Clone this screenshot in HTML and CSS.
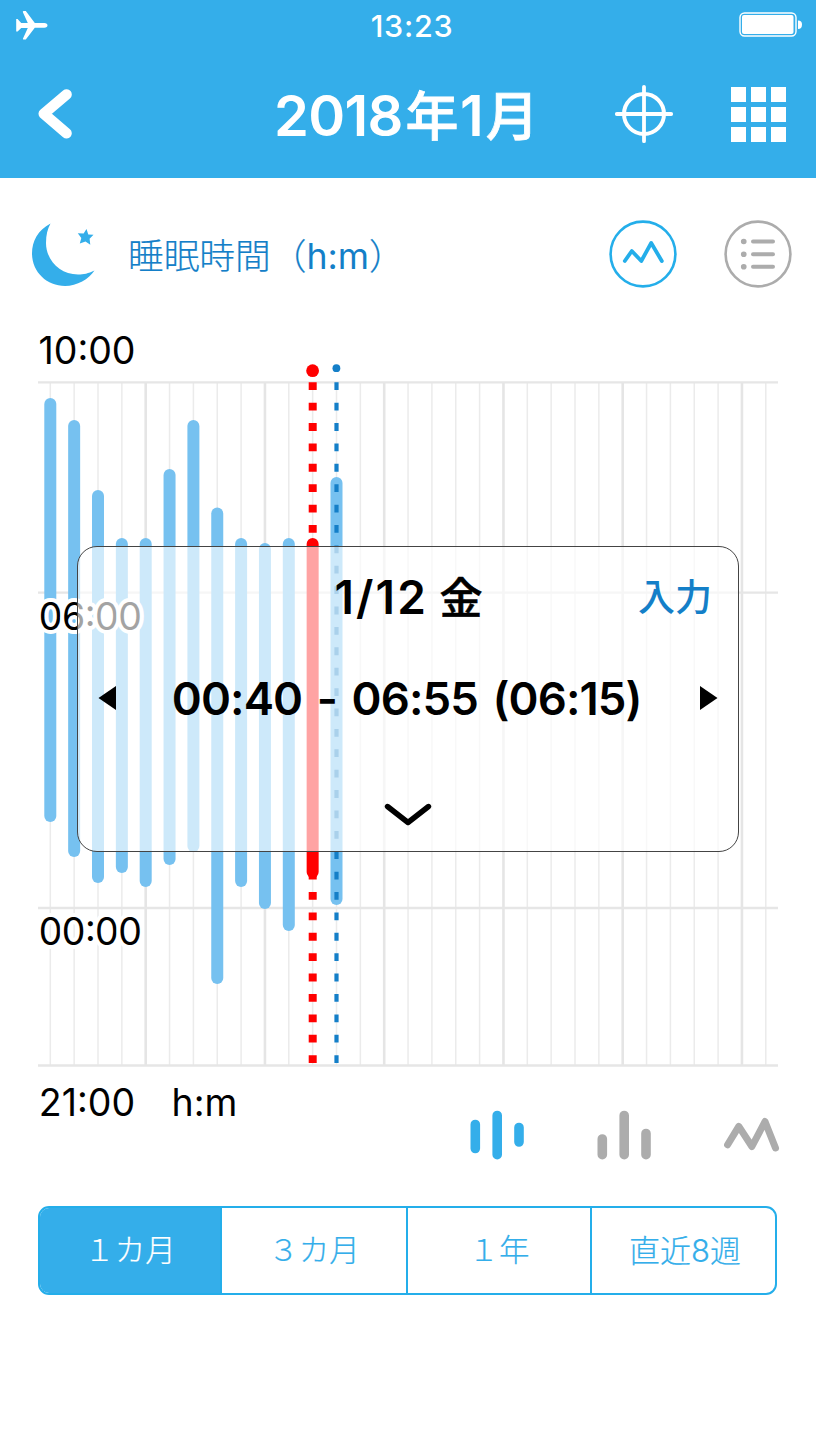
FILE: index.html
```html
<!DOCTYPE html>
<html lang="ja">
<head>
<meta charset="utf-8">
<title>睡眠時間</title>
<link rel="stylesheet" href="styles.css">
</head>
<body>
<div class="screen">
  <header class="header">
    <div class="status">
      <svg class="plane" viewBox="0 0 32 30" width="32" height="30"><path d="M6.8 1.4Q7 1 7.500 1H9.800L18.800 13H28.300Q31.500 13.300 31.500 15.300T28.300 17.800H18.800L9.800 29.500H7.500Q6.600 29.500 7 28.500L11.800 17.900H5.200L1.600 21.500H.2V9H1.600L5.200 13H11.800L7 2.500Z" fill="#fff"/></svg>
      <span class="clock">13:23</span>
      <svg class="battery" viewBox="0 0 64 26" width="64" height="26"><rect x="1" y="1" width="56" height="23" rx="4.500" fill="none" stroke="#fff" stroke-width="1.400"/><rect x="3" y="3" width="51.500" height="19" rx="2" fill="#fff"/><path d="M59 8.500Q63 8.500 63 12.700T59 17Z" fill="#fff"/></svg>
    </div>
    <div class="navbar">
      <svg class="back" viewBox="0 0 36 50" width="36" height="50"><path d="M29.500 5.500 6.800 24.800 29.500 44.300" fill="none" stroke="#fff" stroke-width="10.600" stroke-linecap="round" stroke-linejoin="round"/></svg>
      <h1 class="title">2018<b>年</b>1<b>月</b></h1>
      <svg class="target" viewBox="0 0 60 60" width="60" height="60" fill="none" stroke="#fff" stroke-width="4" stroke-linecap="round"><circle cx="30" cy="30" r="20"/><path d="M30 2.800V57.200M2.800 30H57.200" stroke-width="3.800"/></svg>
      <div class="grid"><i></i><i></i><i></i><i></i><i></i><i></i><i></i><i></i><i></i></div>
    </div>
  </header>

  <section class="heading">
    <svg class="moon" viewBox="0 0 64 64" width="64" height="64" fill="#34aeea"><path d="M18.500.5C6 7 0 18 0 30.500C0 49 15 63 33 63C45 63 57 56 62.500 47.500C56 50.500 52 51.500 46 51.500C28 51.500 14 37 14 20C14 12 15.500 6 18.500.5Z"/><path d="M54.500 6 56.300 11.500 61.500 11.800 57.600 15.800 58.300 21.700 53.500 18.500 47.800 20.400 49.300 15 45.800 10.200 51.600 10.600Z"/></svg>
    <h2 class="subject">睡眠時間（<span>h:m</span>）</h2>
    <svg class="round" viewBox="0 0 68 68" width="68" height="68" fill="none" stroke="#24aeea" stroke-linecap="round" stroke-linejoin="round"><circle cx="34" cy="34" r="32.400" stroke-width="2.600"/><path d="M15.800 41 22.800 31 32.300 41 42.200 23 52.800 41" stroke-width="3.800"/></svg>
    <svg class="round" viewBox="0 0 68 68" width="68" height="68" fill="none" stroke="#acacac" stroke-linecap="round"><circle cx="34" cy="34" r="32.400" stroke-width="2.600"/><path d="M29 21.500H49M29 34.200H49M29 46.800H49" stroke-width="4"/><path d="M19.700 21.500h.1M19.700 34.200h.1M19.700 46.800h.1" stroke-width="5.600"/></svg>
  </section>

  <section class="chart">
    <svg class="plot" viewBox="0 320 816 820" width="816" height="820">
      <g id="columns"></g>
      <path d="M38 382.400H778M38 592.600H778M38 908H778M38 1065.500H778" stroke="#e6e6e6" stroke-width="2.400"/>
      <g id="bars" stroke-width="12" stroke-linecap="round"></g>
      <path d="M312.700 382.300V1064" stroke="#f00" stroke-width="8" stroke-dasharray="7.800 12.590"/>
      <path d="M336.500 382.300V1064" stroke="#147fc8" stroke-width="4.200" stroke-dasharray="7.800 12.590"/>
      <circle cx="312.600" cy="370.700" r="6.400" fill="#f00"/>
      <circle cx="336.400" cy="368.200" r="3.900" fill="#147fc8"/>
      <g class="axis">
        <text x="38.500" y="363.500">10:00</text>
        <text x="38.800" y="630" textLength="103">06:00</text>
        <text x="38.800" y="945" textLength="103">00:00</text>
        <text x="38.800" y="1115.500">21:00</text>
        <text x="171.500" y="1115.500">h:m</text>
      </g>
    </svg>
    <div class="popup">
      <div class="popup-head"><span class="date">1/12 <b>金</b></span><a class="input">入力</a></div>
      <div class="popup-row">
        <svg width="19" height="26" viewBox="0 0 19 26"><path d="M18 1V25L.5 13Z"/></svg>
        <span class="range">00:40 - 06:55 (06:15)</span>
        <svg width="19" height="26" viewBox="0 0 19 26"><path d="M1 1V25L18.500 13Z"/></svg>
      </div>
      <svg class="down" width="48" height="26" viewBox="0 0 48 26"><path d="M3.500 3.500 24 19.500 44.500 3.500" fill="none" stroke="#000" stroke-width="5.400" stroke-linecap="round" stroke-linejoin="round"/></svg>
    </div>
  </section>

  <div class="modes">
    <svg width="56" height="50" viewBox="0 0 56 50" stroke="#34aeea" stroke-width="9.600" stroke-linecap="round"><path d="M5.300 14.500V38.500M27.200 5.500V44.700M49 17.500V32"/></svg>
    <svg width="56" height="50" viewBox="0 0 56 50" stroke="#acacac" stroke-width="9.600" stroke-linecap="round"><path d="M5.300 29V44.700M27.200 5.500V44.700M49 23.500V44.700"/></svg>
    <svg width="56" height="50" viewBox="0 0 56 50" fill="none" stroke="#acacac" stroke-width="7" stroke-linecap="round" stroke-linejoin="round"><path d="M3.600 34.800 14.800 16.400 27.900 36.500 41 11.500 51.500 38"/></svg>
  </div>

  <nav class="tabs">
    <span class="tab active">１カ月</span><span class="tab">３カ月</span><span class="tab">１年</span><span class="tab last">直近8週</span>
  </nav>
</div>
<script src="chart.js"></script>
</body>
</html>
```

FILE: styles.css
```css
* { box-sizing: border-box; }
body { margin: 0; background: #fff; font-family: Inter, "Noto Sans CJK JP", sans-serif; color: #000; }
.screen { width: 816px; height: 1448px; overflow: hidden; display: flex; flex-direction: column; }
.header { height: 178px; flex: none; background: #34aeea; color: #fff; }
.status { height: 52px; display: grid; grid-template-columns: 1fr auto 1fr; align-items: center; padding: 0 13px 0 16px; }
.plane, .battery { margin-bottom: 2px; }
.clock { font-size: 30.500px; font-weight: 500; line-height: 52px; letter-spacing: 0.7px; margin-left: 5px; white-space: nowrap; }
.battery { justify-self: end; }
.navbar { height: 126px; display: flex; align-items: center; padding: 0 30px 2px 37px; }
.back { flex: none; }
.title { margin: 5px 0 0 201px; width: 264px; font-size: 56px; font-weight: 600; letter-spacing: -0.700px; line-height: 80px; white-space: nowrap; }
.title b { font-size: 53px; font-weight: 500; margin: 0 2px 0 3px; -webkit-text-stroke: 0.8px #fff; }
.target { margin: 0 0 0 76px; flex: none; }
.grid { display: grid; grid-template-columns: repeat(3, 15px); gap: 5px; margin-left: 57px; }
.grid i { height: 15px; background: #fff; }
.heading { height: 142px; flex: none; display: flex; align-items: center; padding: 0 24px 0 32px; }
.moon { margin-top: 11px; flex: none; }
.subject { margin: 13px 0 0 32px; width: 481px; font-size: 35.700px; line-height: 50px; font-weight: 300; color: #147fc8; white-space: nowrap; -webkit-text-stroke: 0.2px #147fc8; }
.subject span { font-weight: 400; -webkit-text-stroke: 0; }
.round { flex: none; margin-top: 10px; }
.round + .round { margin-left: 47px; }
.chart { position: relative; height: 790px; flex: none; }
.plot { display: block; }
.axis text { font-size: 37.500px; font-weight: 400; stroke: #fff; stroke-width: 8px; stroke-linejoin: round; paint-order: stroke; }
.popup { position: absolute; left: 76.500px; top: 225.500px; width: 662.500px; height: 306px; border: 1.300px solid #444; border-radius: 20px; background: rgba(255,255,255,.64); }
.popup-head { display: flex; justify-content: space-between; align-items: center; height: 60px; margin: 18px 26px 0 257px; }
.date { font-size: 46px; font-weight: 600; letter-spacing: 2.100px; white-space: nowrap; }
.date b { font-size: 43px; font-weight: 500; letter-spacing: 0; margin-left: -2px; -webkit-text-stroke: 0.6px #000; }
.input { font-size: 37px; font-weight: 500; color: #147fc8; }
.popup-row { display: flex; align-items: center; justify-content: space-between; margin: 43px 20px 0; height: 60px; }
.range { font-size: 45.500px; font-weight: 600; letter-spacing: -0.900px; word-spacing: 4px; padding: 2px 2px 0 0; white-space: nowrap; }
.down { display: block; margin: 75px auto 0; }
.modes { display: flex; justify-content: flex-end; gap: 71px; height: 96px; padding-right: 36px; flex: none; }
.modes svg { flex: none; }
.tabs { display: grid; grid-template-columns: 180px 186px 184px 1fr; margin: 0 39px 0 38px; height: 89px; border: 2px solid #24aeea; border-radius: 11px; overflow: hidden; flex: none; }
.tab { display: flex; align-items: center; justify-content: center; font-size: 30.500px; font-weight: 300; color: #34aeea; border-left: 2px solid #24aeea; padding-bottom: 5px; -webkit-text-stroke: 0.2px currentColor; }
.tab.active { background: #34aeea; color: #fff; border-left: 0; }
.tab.last { font-size: 31px; padding-left: 3px; }
```

FILE: chart.js
```js
const NS = 'http://www.w3.org/2000/svg';
const colX = i => 50.3 + 23.85 * i;
const line = (parent, x, y1, y2, attrs) => {
  const el = document.createElementNS(NS, 'path');
  el.setAttribute('d', `M${x} ${y1}V${y2}`);
  Object.entries(attrs).forEach(([k, v]) => el.setAttribute(k, v));
  document.getElementById(parent).append(el);
};
for (let i = 0; i < 31; i++) {
  const major = i % 5 === 4;
  line('columns', colX(i), 382, 1065, { stroke: major ? '#e5e5e5' : '#ebebeb', 'stroke-width': major ? 2.6 : 1.5 });
}
const spans = [[398, 822], [420, 857], [490, 883], [538, 873], [538, 887], [469, 865], [420, 852],
  [507.5, 984], [538, 887], [543, 909], [538, 931], [538, 878], [477, 905]];
spans.forEach(([a, b], i) => line('bars', colX(i), a + 6, b - 6, { stroke: i === 11 ? '#f00' : '#76c1f0' }));
```
